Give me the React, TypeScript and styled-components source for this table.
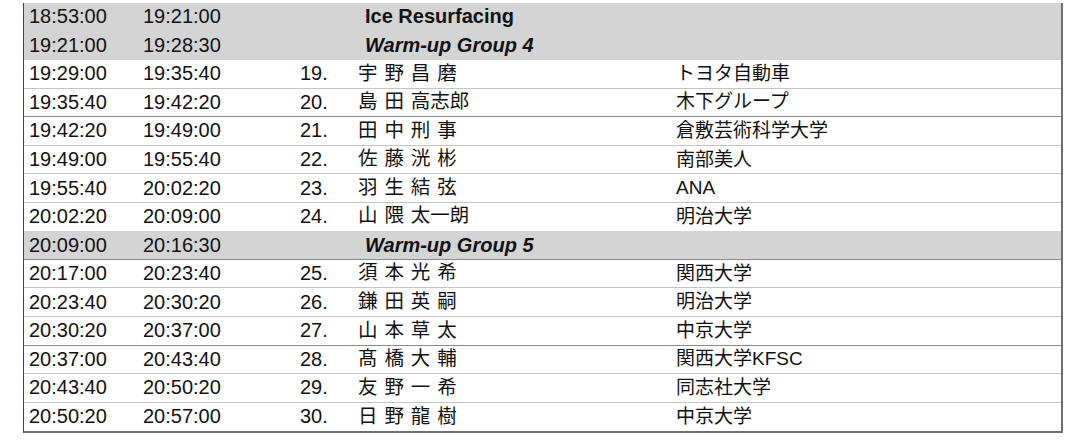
import styled, { createGlobalStyle } from "styled-components"

const GlobalStyle = createGlobalStyle`
  html, body { margin: 0; padding: 0; background: #fff; }
  body {
    font-family: "Liberation Sans", Arial, "Noto Sans CJK JP", sans-serif;
    color: #111;
  }
`

// Styles
const Page = styled.div`
  width: 1085px;
  height: 440px;
  overflow: hidden;
  padding: 3px 0 0 23px;
  box-sizing: border-box;
`
const Table = styled.div`
  width: 1040px;
  border-left: 1.5px solid #444;
  border-right: 2px solid #6e6e6e;
  border-bottom: 2px solid #6e6e6e;
  box-sizing: border-box;
`
const Row = styled.div<{ $band?: boolean; $line?: "light" | "dark" | "none" }>`
  display: grid;
  grid-template-columns: 114px 157px 58px 318px 1fr;
  height: 28.55px;
  box-sizing: border-box;
  align-items: center;
  font-size: 20px;
  line-height: 1;
  padding-bottom: 1px;
  background: ${(p) => (p.$band ? "#d4d4d4" : "#fff")};
  border-bottom: 1.5px solid
    ${(p) => (p.$line === "dark" ? "#8a8a8a" : p.$line === "none" ? "transparent" : "#c4c4c4")};
  &:last-child { border-bottom: none; }
`
const Cell = styled.div`
  padding-left: 5px;
  white-space: nowrap;
`
const Label = styled.div<{ $italic?: boolean }>`
  grid-column: 4 / 6;
  padding-left: 12px;
  font-weight: bold;
  font-style: ${(p) => (p.$italic ? "italic" : "normal")};
  white-space: nowrap;
`
const Name = styled.div`
  padding-left: 5px;
  white-space: pre;
  font-family: "Liberation Sans", "Noto Sans CJK JP", sans-serif;
  font-size: 19.5px;
  word-spacing: 1.5px;
`
const Club = styled.div`
  padding-left: 5px;
  white-space: nowrap;
  font-family: "Liberation Sans", "Noto Sans CJK JP", sans-serif;
  font-size: 19px;
`

type Entry =
  | { kind: "label"; start: string; end: string; text: string; italic?: boolean; line?: "light" | "dark" | "none" }
  | { kind: "skater"; start: string; end: string; no: string; name: string; club: string; line?: "light" | "dark" | "none" }

const entries: Entry[] = [
  { kind: "label", start: "18:53:00", end: "19:21:00", text: "Ice Resurfacing", line: "none" },
  { kind: "label", start: "19:21:00", end: "19:28:30", text: "Warm-up Group 4", italic: true, line: "none" },
  { kind: "skater", start: "19:29:00", end: "19:35:40", no: "19.", name: "宇 野 昌 磨", club: "トヨタ自動車" },
  { kind: "skater", start: "19:35:40", end: "19:42:20", no: "20.", name: "島 田 高志郎", club: "木下グループ", line: "dark" },
  { kind: "skater", start: "19:42:20", end: "19:49:00", no: "21.", name: "田 中 刑 事", club: "倉敷芸術科学大学" },
  { kind: "skater", start: "19:49:00", end: "19:55:40", no: "22.", name: "佐 藤 洸 彬", club: "南部美人" },
  { kind: "skater", start: "19:55:40", end: "20:02:20", no: "23.", name: "羽 生 結 弦", club: "ANA" },
  { kind: "skater", start: "20:02:20", end: "20:09:00", no: "24.", name: "山 隈 太一朗", club: "明治大学", line: "none" },
  { kind: "label", start: "20:09:00", end: "20:16:30", text: "Warm-up Group 5", italic: true, line: "dark" },
  { kind: "skater", start: "20:17:00", end: "20:23:40", no: "25.", name: "須 本 光 希", club: "関西大学" },
  { kind: "skater", start: "20:23:40", end: "20:30:20", no: "26.", name: "鎌 田 英 嗣", club: "明治大学" },
  { kind: "skater", start: "20:30:20", end: "20:37:00", no: "27.", name: "山 本 草 太", club: "中京大学", line: "dark" },
  { kind: "skater", start: "20:37:00", end: "20:43:40", no: "28.", name: "髙 橋 大 輔", club: "関西大学KFSC" },
  { kind: "skater", start: "20:43:40", end: "20:50:20", no: "29.", name: "友 野 一 希", club: "同志社大学" },
  { kind: "skater", start: "20:50:20", end: "20:57:00", no: "30.", name: "日 野 龍 樹", club: "中京大学" },
]

const App: React.FC = () => {
  return (
    <Page>
      <GlobalStyle />
      <Table>
        {entries.map((e) =>
          e.kind === "label" ? (
            <Row key={e.start} $band $line={e.line}>
              <Cell>{e.start}</Cell>
              <Cell>{e.end}</Cell>
              <Cell />
              <Label $italic={e.italic}>{e.text}</Label>
            </Row>
          ) : (
            <Row key={e.start} $line={e.line}>
              <Cell>{e.start}</Cell>
              <Cell>{e.end}</Cell>
              <Cell>{e.no}</Cell>
              <Name>{e.name}</Name>
              <Club>{e.club}</Club>
            </Row>
          )
        )}
      </Table>
    </Page>
  )
}

export default App
